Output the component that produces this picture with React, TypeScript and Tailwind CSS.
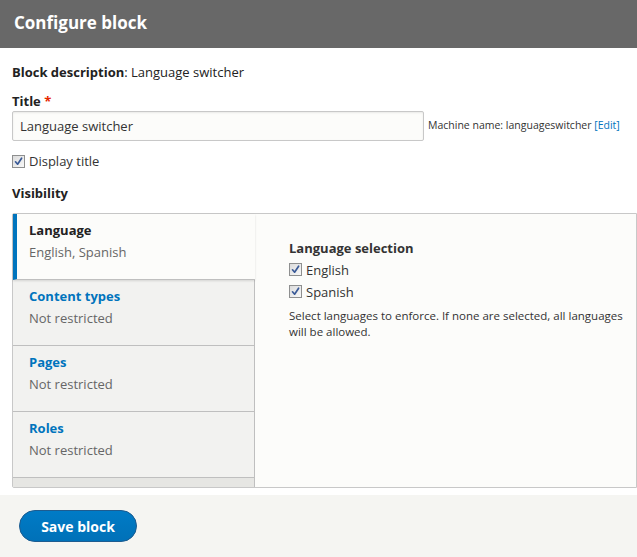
import { useState } from "react";

const TABS = [
  { label: "Language", summary: "English, Spanish" },
  { label: "Content types", summary: "Not restricted" },
  { label: "Pages", summary: "Not restricted" },
  { label: "Roles", summary: "Not restricted" },
];

function Check({ checked, onChange }: { checked: boolean; onChange: () => void }) {
  return (
    <span
      role="checkbox"
      aria-checked={checked}
      onClick={onChange}
      className="w-[13px] h-[13px] shrink-0 border border-[#8e8f8f] bg-gradient-to-br from-[#dcdcdc] to-[#f8f8f8] flex items-center justify-center cursor-pointer"
    >
      {checked && (
        <svg width="9" height="9" viewBox="0 0 9 9">
          <path d="M1.5 4.8 L3.6 7.2 L7.6 1.2" fill="none" stroke="#3a5a97" strokeWidth="1.7" strokeLinecap="round" strokeLinejoin="round" />
        </svg>
      )}
    </span>
  );
}

export default function App() {
  const [active, setActive] = useState(0);
  const [displayTitle, setDisplayTitle] = useState(true);
  const [langs, setLangs] = useState({ English: true, Spanish: true });

  return (
    <div className="w-[637px] h-[557px] overflow-hidden bg-white text-[#333] font-['Open_Sans',sans-serif] flex flex-col">
      <div className="h-[48px] shrink-0 bg-[#686868] flex items-center px-[14px]">
        <h1 className="text-[17px] font-bold text-white -mt-[3px]">Configure block</h1>
      </div>

      <div className="flex-1 px-[12px] pt-[14px]">
        <p className="text-[13px] text-[#222] leading-[20px]">
          <span className="font-bold">Block description</span>: Language switcher
        </p>

        <label className="block mt-[10px] text-[13px] font-bold text-[#222] leading-[18px]">
          Title <span className="text-[#e62600]">*</span>
        </label>
        <div className="flex items-center mt-[1px]">
          <input
            defaultValue="Language switcher"
            className="w-[412px] h-[30px] rounded-[2px] border border-[#c8c8c8] bg-[#fcfcfa] px-[7px] text-[13px] text-[#333] outline-none shadow-[inset_0_1px_2px_rgba(0,0,0,0.08)]"
          />
          <span className="ml-[4px] text-[10.5px] text-[#333]">
            Machine name: languageswitcher <span className="text-[#0074bd]">[Edit]</span>
          </span>
        </div>

        <label className="flex items-center gap-[4px] mt-[11px] text-[13px] text-[#333]">
          <Check checked={displayTitle} onChange={() => setDisplayTitle((v) => !v)} />
          Display title
        </label>

        <h2 className="mt-[12px] text-[13px] font-bold text-[#222] leading-[18px]">Visibility</h2>

        <div className="mt-[11px] mr-[-12px] h-[275px] flex border border-[#c8c8c8] rounded-tl-[2px] rounded-bl-[2px]">
          <div className="w-[242px] shrink-0 flex flex-col bg-[#e6e6e3]">
            {TABS.map((tab, i) => {
              const isActive = i === active;
              return (
                <div
                  key={tab.label}
                  role="tab"
                  onClick={() => setActive(i)}
                  className={`h-[66px] shrink-0 pt-[7px] border-b border-[#bfbfbf] cursor-pointer ${
                    isActive
                      ? "bg-[#fcfcfa] border-l-[4px] border-l-[#0074bd] pl-[12px] shadow-[0_1px_2px_rgba(0,0,0,0.12)] relative"
                      : "bg-[#f2f2f0] border-r border-r-[#bfbfbf] pl-[16px]"
                  }`}
                >
                  <div className={`text-[13px] font-bold leading-[18px] ${isActive ? "text-[#222]" : "text-[#0074bd]"}`}>
                    {tab.label}
                  </div>
                  <div className="mt-[4px] text-[13px] text-[#666] leading-[18px]">{tab.summary}</div>
                </div>
              );
            })}
            <div className="flex-1 border-r border-[#bfbfbf]" />
          </div>

          <div className="flex-1 bg-[#fcfcfa] pl-[34px] pt-[25px] pr-[8px]">
            <h3 className="text-[13px] font-bold text-[#333] leading-[18px]">Language selection</h3>
            {(["English", "Spanish"] as const).map((lang) => (
              <label key={lang} className="flex items-center gap-[4px] mt-[4px] text-[13px] text-[#333] leading-[18px]">
                <Check checked={langs[lang]} onChange={() => setLangs((l) => ({ ...l, [lang]: !l[lang] }))} />
                {lang}
              </label>
            ))}
            <p className="mt-[7px] text-[11.5px] text-[#333] leading-[16px]">
              Select languages to enforce. If none are selected, all languages will be allowed.
            </p>
          </div>
        </div>
      </div>

      <div className="h-[62px] shrink-0 bg-[#f5f5f2] flex items-center px-[19px]">
        <button
          type="button"
          className="w-[118px] h-[32px] rounded-full bg-[#0071b8] bg-gradient-to-b from-[#007bc6] to-[#0071b8] border border-[#1e5c90] text-white text-[14px] font-bold"
        >
          Save block
        </button>
      </div>
    </div>
  );
}
